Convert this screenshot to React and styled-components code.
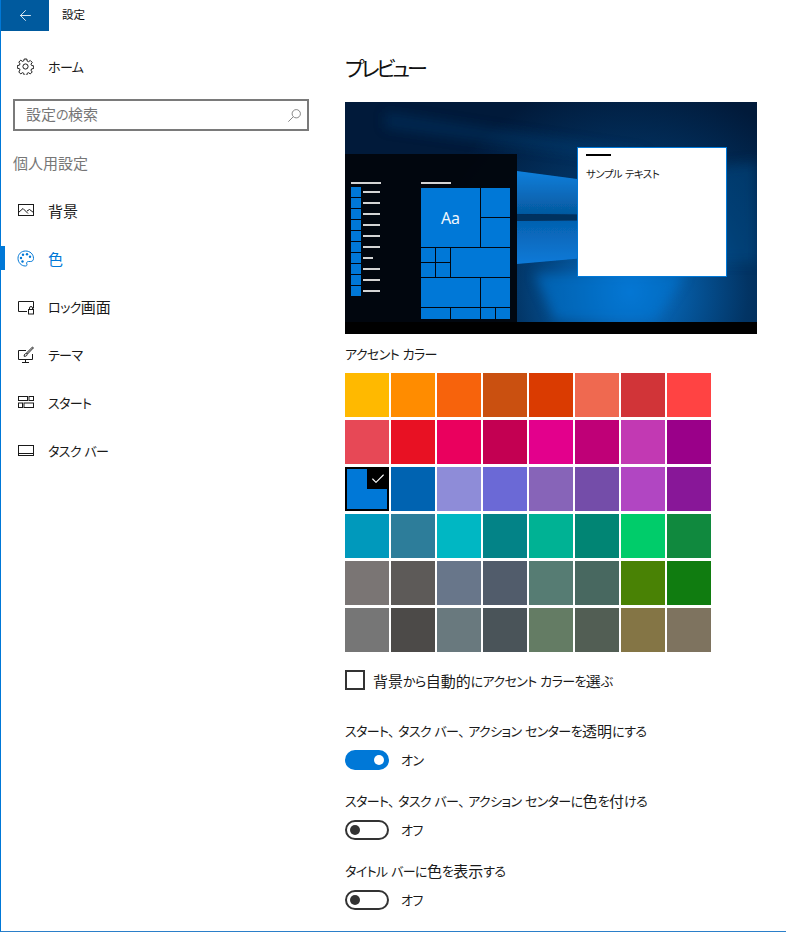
import React from 'react';
import styled, { createGlobalStyle } from 'styled-components';
import { ArrowLeft, Check } from 'lucide-react';

const GlobalStyle = createGlobalStyle`
  html, body {
    margin: 0;
    padding: 0;
    background: #fff;
  }
  body {
    font-family: "Noto Sans CJK JP", "Noto Sans", sans-serif;
    font-feature-settings: "palt";
    font-size: 15px;
    color: #1a1a1a;
  }
`;

const ACCENT = '#0078d7';

const Frame = styled.div`
  width: 786px;
  height: 932px;
  box-sizing: border-box;
  border-left: 1px solid ${ACCENT};
  border-bottom: 1px solid #2b7fc9;
  overflow: hidden;
  display: flex;
  flex-direction: column;
`;

const TitleBar = styled.header`
  height: 32px;
  flex: none;
  display: flex;
  align-items: center;
`;

const BackButton = styled.button`
  width: 48px;
  height: 31px;
  margin-bottom: 1px;
  padding: 0;
  border: 0;
  background: #005a9e;
  color: #fff;
  display: flex;
  align-items: center;
  justify-content: center;
`;

const AppTitle = styled.span`
  margin: 0 0 4px 13px;
  font-size: 11.5px;
  line-height: 16px;
  color: #111;
`;

// Japanese UI fonts set kana smaller and tighter than kanji
const Kana = styled.span`
  position: relative;
  top: -1px;
  font-size: 0.87em;
  letter-spacing: -0.05em;
  word-spacing: 0.1em;
`;

const Comma = styled(Kana)`
  margin-right: 4px;
`;

const Text = ({ children }) =>
  children.split(/([\u3040-\u30ff ]+|\u3001)/).map((part, i) => {
    if (part === '\u3001') return <Comma key={i}>{part}</Comma>;
    return i % 2 ? <Kana key={i}>{part}</Kana> : part;
  });

const Body = styled.div`
  flex: 1;
  display: flex;
`;

const Sidebar = styled.nav`
  width: 319px;
  flex: none;
  display: flex;
  flex-direction: column;
`;

const NavItem = styled.div`
  position: relative;
  height: 48px;
  flex: none;
  display: flex;
  align-items: center;
  gap: 14px;
  padding-left: 16px;
  font-size: 15px;
  color: ${(props) => (props.active ? ACCENT : '#1a1a1a')};

  ${(props) => props.active && `
    &::before {
      content: '';
      position: absolute;
      left: 0;
      top: 12px;
      width: 4px;
      height: 24px;
      background: ${ACCENT};
    }
  `}
`;

const HomeItem = styled(NavItem)`
  margin-top: 10px;
`;

const IconBox = styled.svg`
  width: 17px;
  height: 17px;
  flex: none;
  fill: none;
  stroke: currentColor;
  stroke-width: 1;
`;

const SearchBox = styled.div`
  width: 296px;
  height: 32px;
  box-sizing: border-box;
  margin: 9px 0 0 12px;
  border: 2px solid #7a7a7a;
  display: flex;
  align-items: center;
  justify-content: space-between;
  padding: 0 5px 3px 11px;
  color: #767676;
`;

const SearchGlyph = styled(IconBox)`
  width: 15px;
  height: 15px;
  margin-top: 3px;
`;

const SectionLabel = styled.div`
  margin: 21px 0 12px 12px;
  height: 22px;
  line-height: 22px;
  color: #767676;
`;

const Content = styled.main`
  flex: 1;
  padding: 0 0 0 25px;
  display: flex;
  flex-direction: column;
`;

const Heading = styled.h1`
  margin: 18px 0 17px;
  height: 35px;
  line-height: 35px;
  font-size: 21px;
  letter-spacing: -3.2px;
  font-weight: 400;
  color: #111;
`;

const Preview = styled.div`
  position: relative;
  width: 412px;
  height: 232px;
  background: #02234c;
  overflow: hidden;
  display: flex;
  flex-direction: column;
`;

const Wallpaper = styled.svg`
  position: absolute;
  inset: 0;
`;

const Desktop = styled.div`
  position: relative;
  flex: 1;
  display: flex;
`;

const StartMenu = styled.div`
  width: 172px;
  height: 168px;
  margin-top: 52px;
  flex: none;
  box-sizing: border-box;
  padding: 28px 7px 0 6px;
  background: rgba(1, 5, 12, 0.94);
  display: flex;
  overflow: hidden;
`;

const AppColumn = styled.div`
  width: 70px;
  flex: none;
  display: flex;
  flex-direction: column;
`;

const MenuTitle = styled.div`
  width: 30px;
  height: 2px;
  background: #d4d4d4;
  margin-bottom: 4px;
`;

const AppListTitle = styled(MenuTitle)`
  margin-bottom: 3px;
`;

const AppRow = styled.div`
  height: 10px;
  margin-bottom: 1px;
  display: flex;
  align-items: center;
  gap: 2px;
`;

const AppSquare = styled.div`
  width: 10px;
  height: 10px;
  background: ${ACCENT};
`;

const AppLine = styled.div`
  width: ${(props) => props.width}px;
  height: 2px;
  background: #d4d4d4;
`;

const TileColumn = styled.div`
  width: 89px;
  flex: none;
`;

const TileGrid = styled.div`
  display: grid;
  grid-template-columns: repeat(6, 14px);
  grid-template-rows: repeat(8, 14px) 11px;
  gap: 1px;
`;

const Tile = styled.div`
  grid-column: ${(props) => props.col} / span ${(props) => props.w};
  grid-row: ${(props) => props.row} / span ${(props) => props.h};
  background: ${ACCENT};
  color: #f0f6fc;
  font-family: "Noto Sans", sans-serif;
  font-size: 16px;
  display: flex;
  align-items: center;
  justify-content: center;
`;

const SampleWindow = styled.div`
  width: 150px;
  height: 130px;
  box-sizing: border-box;
  margin: 45px 0 0 60px;
  padding: 6px 8px;
  flex: none;
  background: #fff;
  border: 1px solid ${ACCENT};
`;

const SampleBar = styled.div`
  width: 25px;
  height: 2px;
  background: #000;
  margin-bottom: 10px;
`;

const SampleText = styled.div`
  font-size: 12px;
  line-height: 16px;
  color: #1a1a1a;
`;

const Taskbar = styled.div`
  position: relative;
  height: 12px;
  flex: none;
  background: #000;
`;

const SubHeading = styled.div`
  margin-top: 9px;
  height: 22px;
  line-height: 22px;
  color: #1a1a1a;
`;

const SwatchGrid = styled.div`
  width: 366px;
  margin-top: 8px;
  display: grid;
  grid-template-columns: repeat(8, 44px);
  grid-auto-rows: 44px;
  column-gap: 2px;
  row-gap: 3px;
`;

const Swatch = styled.div`
  position: relative;
  background: ${(props) => props.color};
  ${(props) => props.selected && `
    box-sizing: border-box;
    outline: 2px solid #000;
    outline-offset: -2px;
    border: 1px solid #000;
  `}
`;

const SwatchCheck = styled.div`
  position: absolute;
  top: 0;
  right: 0;
  width: 21px;
  height: 21px;
  background: #000;
  color: #fff;
  display: flex;
  align-items: center;
  justify-content: center;
`;

const CheckRow = styled.label`
  margin-top: 18px;
  height: 20px;
  display: flex;
  align-items: center;
  gap: 8px;
`;

const CheckBox = styled.span`
  width: 20px;
  height: 20px;
  box-sizing: border-box;
  border: 2px solid #333;
`;

const Setting = styled.div`
  height: 70px;
  flex: none;
`;

const FirstSetting = styled(Setting)`
  margin-top: 30px;
`;

const SettingLabel = styled.div`
  height: 22px;
  line-height: 22px;
`;

const ToggleRow = styled.div`
  margin-top: 8px;
  height: 20px;
  display: flex;
  align-items: center;
  gap: 12px;
`;

const Toggle = styled.span`
  width: 44px;
  height: 20px;
  box-sizing: border-box;
  border-radius: 10px;
  border: 2px solid ${(props) => (props.on ? ACCENT : '#333')};
  background: ${(props) => (props.on ? ACCENT : '#fff')};
  display: flex;
  align-items: center;
  justify-content: ${(props) => (props.on ? 'flex-end' : 'flex-start')};
  padding: 0 3px;
`;

const Knob = styled.span`
  width: 10px;
  height: 10px;
  border-radius: 50%;
  background: ${(props) => (props.on ? '#fff' : '#333')};
`;

const ToggleState = styled.span`
  padding-bottom: 2px;
`;

const SWATCHES = [
  '#ffb900', '#ff8c00', '#f7630c', '#ca5010', '#da3b01', '#ef6950', '#d13438', '#ff4343',
  '#e74856', '#e81123', '#ea005e', '#c30052', '#e3008c', '#bf0077', '#c239b3', '#9a0089',
  '#0078d7', '#0063b1', '#8e8cd8', '#6b69d6', '#8764b8', '#744da9', '#b146c2', '#881798',
  '#0099bc', '#2d7d9a', '#00b7c3', '#038387', '#00b294', '#018574', '#00cc6a', '#10893e',
  '#7a7574', '#5d5a58', '#68768a', '#515c6b', '#567c73', '#486860', '#498205', '#107c10',
  '#767676', '#4c4a48', '#69797e', '#4a5459', '#647c64', '#525e54', '#847545', '#7e735f',
];

const TILES = [
  { col: 1, row: 1, w: 4, h: 4, text: 'Aa' },
  { col: 5, row: 1, w: 2, h: 2 },
  { col: 5, row: 3, w: 2, h: 2 },
  { col: 1, row: 5, w: 1, h: 1 },
  { col: 2, row: 5, w: 1, h: 1 },
  { col: 1, row: 6, w: 1, h: 1 },
  { col: 2, row: 6, w: 1, h: 1 },
  { col: 3, row: 5, w: 4, h: 2 },
  { col: 1, row: 7, w: 4, h: 2 },
  { col: 5, row: 7, w: 2, h: 2 },
  { col: 1, row: 9, w: 2, h: 1 },
  { col: 3, row: 9, w: 2, h: 1 },
  { col: 5, row: 9, w: 1, h: 1 },
  { col: 6, row: 9, w: 1, h: 1 },
];

const APP_LINES = [17, 17, 17, 17, 17, 17, 10, 17, 17, 17];

const GearIcon = () => (
  <IconBox viewBox="0 0 17 17">
    <circle cx="8.5" cy="8.5" r="2.6" />
    <path d="M7.2 1h2.6l.4 2.1 1.3.6 1.8-1.2 1.9 1.9-1.2 1.8.6 1.3 2.1.4v2.6l-2.1.4-.6 1.3 1.2 1.8-1.9 1.9-1.8-1.2-1.3.6-.4 2.1H7.2l-.4-2.1-1.3-.6-1.8 1.2-1.9-1.9L3 11.9l-.6-1.3L.3 10.2V7.6l2.1-.4.6-1.3-1.2-1.8 1.9-1.9 1.8 1.2 1.3-.6z" />
  </IconBox>
);

const PictureIcon = () => (
  <IconBox viewBox="0 0 17 17">
    <rect x="1.5" y="2.5" width="15" height="11" />
    <path d="M1.5 10.5 6 6.5l5 5M10 9l2.5-1.5 4 3" />
  </IconBox>
);

const PaletteIcon = () => (
  <IconBox viewBox="0 0 17 17" strokeWidth="1.2">
    <path d="M8.5 1C4.3 1 1 4.2 1 8.3c0 4.2 3.3 7.7 7.3 7.7 1.6 0 2-1 1.5-2-.6-1.2.1-2.5 1.6-2.5h2.3c1.6 0 2.8-1.2 2.8-3C16.5 4 13 1 8.5 1z" />
    <g fill="currentColor" stroke="none">
      <circle cx="4" cy="8" r="1.2" />
      <circle cx="6" cy="4.8" r="1.2" />
      <circle cx="10" cy="4.2" r="1.2" />
      <circle cx="13" cy="6.8" r="1.2" />
      <circle cx="5.5" cy="11.5" r="1.2" />
    </g>
  </IconBox>
);

const LockScreenIcon = () => (
  <IconBox viewBox="0 0 17 17">
    <path d="M10 13.5H1.5v-10h15v7" />
    <rect x="11.5" y="11.5" width="5" height="4.5" />
    <path d="M12.5 11.5V10a1.5 1.5 0 0 1 3 0v1.5" />
  </IconBox>
);

const ThemeIcon = () => (
  <IconBox viewBox="0 0 17 17">
    <path d="M9 4.5H1.5v9h14V8M8.5 13.5V16M5 16.5h7" />
    <path d="M15.5 1 9.5 7l1 1 6-6.2zM9.5 7.5c-1.5 0-2.500 1-2.300 2.800 1.800.2 3-.8 3-2.200" />
  </IconBox>
);

const StartIcon = () => (
  <IconBox viewBox="0 0 17 17">
    <rect x="1.5" y="2.5" width="9" height="4" />
    <rect x="12" y="2.5" width="4.5" height="4" />
    <rect x="1.5" y="9" width="4" height="4.5" />
    <rect x="7" y="9" width="9.5" height="4.5" />
  </IconBox>
);

const TaskbarIcon = () => (
  <IconBox viewBox="0 0 17 17">
    <rect x="1.5" y="3.5" width="15" height="10" />
    <path d="M1.5 11.5h15" />
  </IconBox>
);

const SearchIcon = () => (
  <SearchGlyph viewBox="0 0 17 17">
    <circle cx="10.5" cy="6.5" r="4.7" />
    <path d="M7 10 1.5 15.5" />
  </SearchGlyph>
);

const NAV_ITEMS = [
  { label: '背景', Icon: PictureIcon },
  { label: '色', Icon: PaletteIcon, active: true },
  { label: 'ロック画面', Icon: LockScreenIcon },
  { label: 'テーマ', Icon: ThemeIcon },
  { label: 'スタート', Icon: StartIcon },
  { label: 'タスク バー', Icon: TaskbarIcon },
];

const SETTINGS = [
  { label: 'スタート、タスク バー、アクション センターを透明にする', on: true },
  { label: 'スタート、タスク バー、アクション センターに色を付ける', on: false },
  { label: 'タイトル バーに色を表示する', on: false },
];

// the hero wallpaper behind the preview
const WallpaperArt = () => (
  <Wallpaper width="412" height="232" viewBox="0 0 412 232">
    <defs>
      <radialGradient id="glow" cx="285" cy="190" r="215" gradientUnits="userSpaceOnUse">
        <stop offset="0" stopColor="#0b7ad8" />
        <stop offset="0.26" stopColor="#05589f" />
        <stop offset="0.55" stopColor="#023464" />
        <stop offset="1" stopColor="#011a3a" />
      </radialGradient>
      <linearGradient id="beamTop" x1="0" y1="0" x2="0" y2="1">
        <stop offset="0" stopColor="#0d7fdc" />
        <stop offset="1" stopColor="#05599f" />
      </linearGradient>
      <linearGradient id="beamLow" x1="0" y1="0" x2="0" y2="1">
        <stop offset="0" stopColor="#0561b0" />
        <stop offset="1" stopColor="#0c7ad8" />
      </linearGradient>
      <filter id="soft">
        <feGaussianBlur stdDeviation="0.6" />
      </filter>
      <filter id="softer">
        <feGaussianBlur stdDeviation="6" />
      </filter>
    </defs>
    <rect width="412" height="232" fill="url(#glow)" />
    <g filter="url(#softer)">
      <path d="M40 10 L300 50 L300 62 L40 26z" fill="#0b4f8f" opacity="0.25" />
      <path d="M240 80 L412 60 L412 160 L240 160z" fill="#03508f" opacity="0.45" />
      <path d="M190 172 L340 172 L310 218 L210 218z" fill="#0a74d0" opacity="0.6" />
    </g>
    <g filter="url(#soft)">
      <path d="M172 69 L240 78 L240 112 L172 112z" fill="url(#beamTop)" />
      <path d="M172 119 L240 119 L240 156 L172 162z" fill="url(#beamLow)" />
      <path d="M172 112 L240 113 L240 118 L172 118z" fill="#04315f" />
    </g>
  </Wallpaper>
);

const App = () => (
  <Frame>
    <GlobalStyle />
    <TitleBar>
      <BackButton>
        <ArrowLeft size={17} strokeWidth={1.2} />
      </BackButton>
      <AppTitle>設定</AppTitle>
    </TitleBar>
    <Body>
      <Sidebar>
        <HomeItem>
          <GearIcon />
          <span><Text>ホーム</Text></span>
        </HomeItem>
        <SearchBox>
          <span><Text>設定の検索</Text></span>
          <SearchIcon />
        </SearchBox>
        <SectionLabel>個人用設定</SectionLabel>
        {NAV_ITEMS.map(({ label, Icon, active }) => (
          <NavItem key={label} active={active}>
            <Icon />
            <span><Text>{label}</Text></span>
          </NavItem>
        ))}
      </Sidebar>
      <Content>
        <Heading>プレビュー</Heading>
        <Preview>
          <WallpaperArt />
          <Desktop>
            <StartMenu>
              <AppColumn>
                <AppListTitle />
                {APP_LINES.map((width, i) => (
                  <AppRow key={i}>
                    <AppSquare />
                    <AppLine width={width} />
                  </AppRow>
                ))}
              </AppColumn>
              <TileColumn>
                <MenuTitle />
                <TileGrid>
                  {TILES.map((tile) => (
                    <Tile key={`${tile.col}-${tile.row}`} {...tile}>
                      {tile.text}
                    </Tile>
                  ))}
                </TileGrid>
              </TileColumn>
            </StartMenu>
            <SampleWindow>
              <SampleBar />
              <SampleText><Text>サンプル テキスト</Text></SampleText>
            </SampleWindow>
          </Desktop>
          <Taskbar />
        </Preview>
        <SubHeading><Text>アクセント カラー</Text></SubHeading>
        <SwatchGrid>
          {SWATCHES.map((color) => (
            <Swatch key={color} color={color} selected={color === ACCENT}>
              {color === ACCENT && (
                <SwatchCheck>
                  <Check size={16} strokeWidth={1.6} />
                </SwatchCheck>
              )}
            </Swatch>
          ))}
        </SwatchGrid>
        <CheckRow>
          <CheckBox />
          <span><Text>背景から自動的にアクセント カラーを選ぶ</Text></span>
        </CheckRow>
        <FirstSetting>
          <SettingLabel><Text>{SETTINGS[0].label}</Text></SettingLabel>
          <ToggleRow>
            <Toggle on={SETTINGS[0].on}>
              <Knob on={SETTINGS[0].on} />
            </Toggle>
            <ToggleState><Text>オン</Text></ToggleState>
          </ToggleRow>
        </FirstSetting>
        {SETTINGS.slice(1).map(({ label, on }) => (
          <Setting key={label}>
            <SettingLabel><Text>{label}</Text></SettingLabel>
            <ToggleRow>
              <Toggle on={on}>
                <Knob on={on} />
              </Toggle>
              <ToggleState><Text>オフ</Text></ToggleState>
            </ToggleRow>
          </Setting>
        ))}
      </Content>
    </Body>
  </Frame>
);

export default App;
